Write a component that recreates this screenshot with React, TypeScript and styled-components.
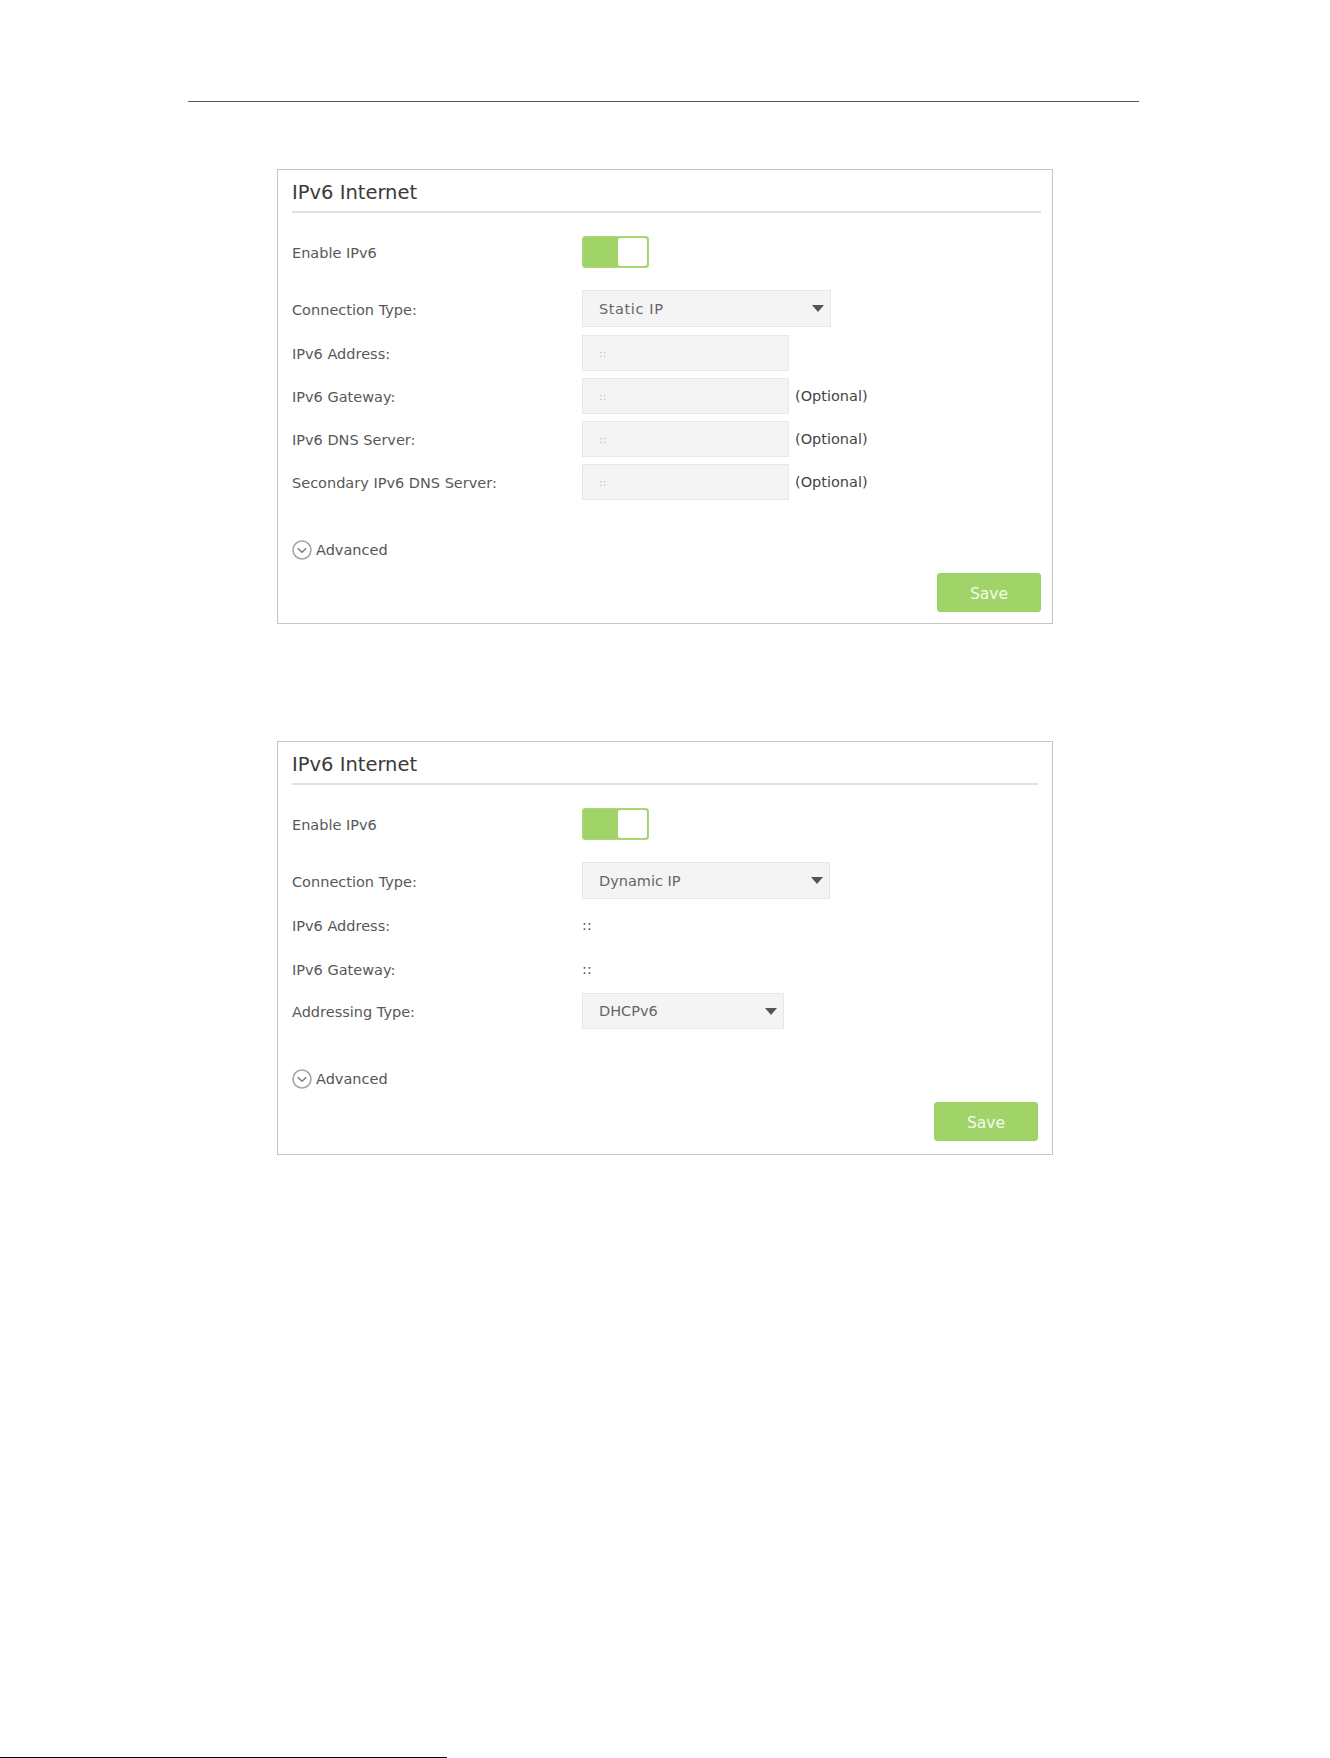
import React from "react";
import styled, { createGlobalStyle } from "styled-components";

const GlobalStyle = createGlobalStyle`
  html, body {
    margin: 0;
    padding: 0;
    background: #ffffff;
  }
  body {
    font-family: "DejaVu Sans", Verdana, "Open Sans", sans-serif;
    color: #555555;
  }
`;

const Page = styled.div`
  position: relative;
  box-sizing: border-box;
  width: 1330px;
  height: 1758px;
  padding-top: 101px;
  display: flex;
  flex-direction: column;
  background: #ffffff;
`;

const HeaderRule = styled.div`
  margin-left: 188px;
  width: 951px;
  height: 1px;
  background: #5a5a5a;
`;

const Cards = styled.div`
  display: flex;
  flex-direction: column;
  gap: 117px;
  margin: 67px 0 0 277px;
  width: 776px;
`;

const Card = styled.section<{ $padRight: number; $padBottom: number }>`
  box-sizing: border-box;
  border: 1px solid #c4c4c4;
  padding: 11px ${(p) => p.$padRight}px ${(p) => p.$padBottom}px 14px;
  display: flex;
  flex-direction: column;
  background: #ffffff;
`;

const Title = styled.h2`
  margin: 0;
  padding-bottom: 6px;
  border-bottom: 2px solid #e1e1e1;
  font-size: 19.5px;
  line-height: 24px;
  font-weight: 400;
  color: #3a3a3a;
`;

const Form = styled.div`
  display: flex;
  flex-direction: column;
  padding-top: 23px;
`;

const Row = styled.div<{ $gap: number; $height: number }>`
  display: grid;
  grid-template-columns: 290px auto 1fr;
  align-items: center;
  margin-top: ${(p) => p.$gap}px;
  min-height: ${(p) => p.$height}px;
`;

const Label = styled.span`
  font-size: 14.5px;
  line-height: 20px;
  padding-top: 2px;
  color: #585858;
`;

const Track = styled.div`
  box-sizing: border-box;
  width: 67px;
  height: 32px;
  border: 1px solid #a9d874;
  border-radius: 3px;
  background: #a0d468;
  padding: 1px;
  display: flex;
  justify-content: flex-end;
`;

const Thumb = styled.div`
  width: 29px;
  height: 100%;
  border-radius: 2px;
  background: #ffffff;
`;

const SelectBox = styled.div<{ $width: number; $height: number; $spacing: number }>`
  box-sizing: border-box;
  width: ${(p) => p.$width}px;
  height: ${(p) => p.$height}px;
  border: 1px solid #e7e7e7;
  background: #f4f4f4;
  display: flex;
  align-items: center;
  justify-content: space-between;
  padding: 0 6px 0 16px;
  font-size: 14.5px;
  letter-spacing: ${(p) => p.$spacing}px;
  color: #666666;
`;

const Caret = styled.svg`
  width: 12px;
  height: 7px;
  display: block;
`;

const InputBox = styled.div`
  box-sizing: border-box;
  width: 207px;
  height: 36px;
  border: 1px solid #e7e7e7;
  background: #f4f4f4;
  display: flex;
  align-items: center;
  padding-left: 16px;
  font-size: 11px;
  color: #b8b8b8;
`;

const Hint = styled.span`
  margin-left: 6px;
  font-size: 14.5px;
  color: #444444;
`;

const Value = styled.span`
  font-size: 14.5px;
  color: #555555;
`;

const AdvancedLink = styled.div<{ $gap: number }>`
  display: flex;
  align-items: center;
  gap: 4px;
  margin-top: ${(p) => p.$gap}px;
  height: 20px;
  font-size: 14.5px;
  color: #555555;
`;

const SaveButton = styled.button`
  align-self: flex-end;
  margin-top: 13px;
  box-sizing: border-box;
  width: 104px;
  height: 39px;
  border: 1px solid #9dd064;
  border-radius: 3px;
  background: #a0d468;
  color: #f4faee;
  font-family: "DejaVu Sans", Verdana, sans-serif;
  font-size: 15.5px;
  padding: 3px 0 0;
`;

const FooterRule = styled.div`
  margin-top: auto;
  width: 447px;
  height: 1px;
  background: #000000;
`;

function Toggle() {
  return (
    <Track>
      <Thumb />
    </Track>
  );
}

function Select({
  value,
  width,
  height,
  spacing = 0,
}: {
  value: string;
  width: number;
  height: number;
  spacing?: number;
}) {
  return (
    <SelectBox $width={width} $height={height} $spacing={spacing}>
      <span>{value}</span>
      <Caret viewBox="0 0 12 7">
        <path d="M0 0 L12 0 L6 7 Z" fill="#555555" />
      </Caret>
    </SelectBox>
  );
}

function Advanced({ gap }: { gap: number }) {
  return (
    <AdvancedLink $gap={gap}>
      <svg width="20" height="20" viewBox="0 0 20 20">
        <circle cx="10" cy="10" r="9" fill="none" stroke="#a3a3a3" strokeWidth="1.5" />
        <path d="M5.8 8.2 L10 12.3 L14.2 8.2" fill="none" stroke="#7a7a7a" strokeWidth="1.4" />
      </svg>
      <span>Advanced</span>
    </AdvancedLink>
  );
}

const staticFields = [
  { label: "IPv6 Address:", optional: false },
  { label: "IPv6 Gateway:", optional: true },
  { label: "IPv6 DNS Server:", optional: true },
  { label: "Secondary IPv6 DNS Server:", optional: true },
];

export default function App() {
  return (
    <>
      <GlobalStyle />
      <Page>
        <HeaderRule />
        <Cards>
          <Card $padRight={11} $padBottom={11}>
            <Title>IPv6 Internet</Title>
            <Form>
              <Row $gap={0} $height={32}>
                <Label>Enable IPv6</Label>
                <Toggle />
              </Row>
              <Row $gap={22} $height={37}>
                <Label>Connection Type:</Label>
                <Select value="Static IP" width={249} height={37} spacing={0.6} />
              </Row>
              {staticFields.map((f, i) => (
                <Row key={f.label} $gap={i === 0 ? 8 : 7} $height={36}>
                  <Label>{f.label}</Label>
                  <InputBox>::</InputBox>
                  {f.optional ? <Hint>(Optional)</Hint> : <span />}
                </Row>
              ))}
              <Advanced gap={40} />
              <SaveButton>Save</SaveButton>
            </Form>
          </Card>

          <Card $padRight={14} $padBottom={13}>
            <Title>IPv6 Internet</Title>
            <Form>
              <Row $gap={0} $height={32}>
                <Label>Enable IPv6</Label>
                <Toggle />
              </Row>
              <Row $gap={22} $height={37}>
                <Label>Connection Type:</Label>
                <Select value="Dynamic IP" width={248} height={37} />
              </Row>
              <Row $gap={8} $height={36}>
                <Label>IPv6 Address:</Label>
                <Value>::</Value>
              </Row>
              <Row $gap={8} $height={36}>
                <Label>IPv6 Gateway:</Label>
                <Value>::</Value>
              </Row>
              <Row $gap={6} $height={36}>
                <Label>Addressing Type:</Label>
                <Select value="DHCPv6" width={202} height={36} />
              </Row>
              <Advanced gap={40} />
              <SaveButton>Save</SaveButton>
            </Form>
          </Card>
        </Cards>
        <FooterRule />
      </Page>
    </>
  );
}
